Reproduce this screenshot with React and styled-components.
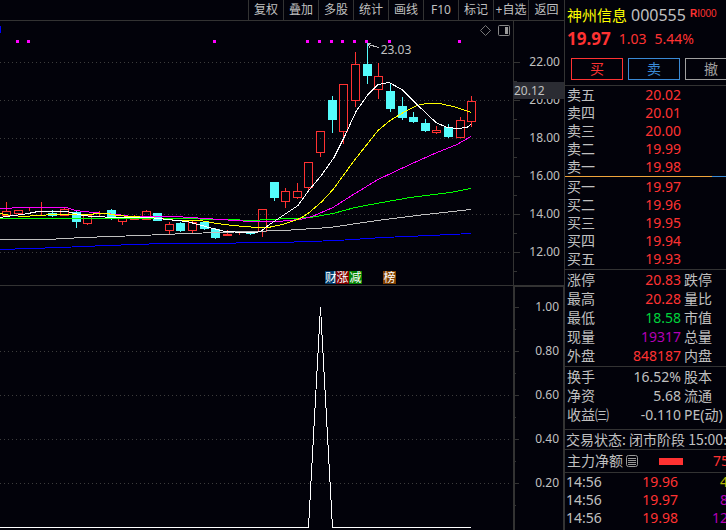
import React from "react";
import styled, { createGlobalStyle, css } from "styled-components";

const color = {
  bg: "#02020a",
  line: "#333333",
  text: "#c0c0c0",
  red: "#ff3232",
  cyan: "#54fcfc",
  blue: "#3a8ad6",
  green: "#00d23c",
  purple: "#b400b4",
  yellow: "#b4b400",
};

const GlobalStyle = createGlobalStyle`
  * { box-sizing: border-box; }
  body {
    margin: 0;
    background: ${color.bg};
    color: ${color.text};
    font-family: "Noto Sans", "Noto Sans CJK SC", sans-serif;
    font-size: 14px;
    overflow: hidden;
  }
  button { font-family: inherit; background: none; padding: 0; cursor: pointer; }
`;

const Layout = styled.div`
  display: flex;
  height: 100vh;
`;

const ChartColumn = styled.main`
  flex: 1;
  min-width: 0;
  display: flex;
  flex-direction: column;
`;

const Toolbar = styled.header`
  display: flex;
  justify-content: flex-end;
  height: 21px;
  flex: none;
  border-bottom: 1px solid ${color.line};
`;

const ToolGroup = styled.nav`
  display: flex;
  border-left: 1px solid ${color.line};
`;

const ToolButton = styled.button`
  width: 35px;
  border: 0;
  border-right: 1px solid ${color.line};
  color: ${color.text};
  font-size: 12px;
  line-height: 18px;
  white-space: nowrap;
  display: flex;
  justify-content: center;
  align-items: center;
  &:last-child { border-right: 0; }
`;

const ChartPane = styled.section`
  flex: ${(p) => p.$share} 1 0;
  min-height: 0;
  display: grid;
  grid-template-columns: minmax(0, 1fr) 51px;
`;

const Plot = styled.div`
  position: relative;
  min-height: 0;
  overflow: hidden;
  border-top: ${(p) => (p.$divided ? `1px solid ${color.line}` : "0")};
`;

const PlotSvg = styled.svg`
  display: block;
  width: 100%;
  height: 100%;
  shape-rendering: crispEdges;
`;

const PeakLabel = styled.span`
  position: absolute;
  left: 74.2%;
  top: 20px;
  font-size: 12px;
  line-height: 18px;
`;

const PlotTools = styled.div`
  position: absolute;
  top: 3px;
  right: 2px;
  display: flex;
  gap: 6px;
`;

const IconButton = styled.button`
  border: 0;
  width: 13px;
  height: 13px;
  display: flex;
`;

const Tags = styled.div`
  position: absolute;
  left: 63.35%;
  bottom: 1px;
  display: flex;
`;

const Tag = styled.span`
  width: 13px;
  height: 13px;
  margin-left: ${(p) => (p.$apart ? "21px" : "0")};
  background: ${(p) => p.$fill};
  color: #fff;
  font-size: 12px;
  line-height: 13px;
  text-align: center;
  &:first-child { width: 11px; }
`;

const Axis = styled.div`
  position: relative;
  display: flex;
  flex-direction: column;
  ${(p) =>
    p.$framed
      ? css`
          padding-right: 1px;
          box-shadow: inset 2px 2px 0 ${color.line}, inset -1px 0 0 ${color.line};
        `
      : css`border-left: 1px solid ${color.line};`}
`;

const AxisSpace = styled.div`
  flex: ${(p) => p.$share} 1 0;
`;

const AxisLabel = styled.div`
  position: relative;
  flex: ${(p) => p.$share} 1 0;
  display: flex;
  align-items: center;
  justify-content: flex-end;
  padding-right: 4px;
  font-size: 12px;
  line-height: 18px;
  &::before, &::after {
    content: "";
    position: absolute;
    left: 0;
    height: 1px;
    background: ${color.line};
  }
  &::before { top: 50%; width: 6px; }
  &::after { top: 100%; width: 3px; }
`;

const CursorPrice = styled.div`
  position: absolute;
  z-index: 1;
  top: 61px;
  left: -1px;
  right: 0;
  background: #2b2c33;
  padding-left: 1px;
  font-size: 12px;
  line-height: 17px;
`;

const QuotePanel = styled.aside`
  width: 162px;
  flex: none;
  border-left: 1px solid ${color.line};
  overflow: hidden;
  white-space: nowrap;
`;

const QuoteHead = styled.div`
  padding: 4px 0 5px 2px;
  border-bottom: 1px solid ${color.line};
`;

const NameRow = styled.h1`
  margin: 0;
  display: flex;
  gap: 4px;
  height: 22px;
  font-weight: 400;
  font-size: 15px;
  line-height: 22px;
`;

const StockName = styled.span`
  color: #ffff00;
`;

const StockCode = styled.span`
  font-size: 16px;
`;

const MarginMark = styled.span`
  color: ${color.red};
  font-family: "Liberation Sans", sans-serif;
  font-size: 10px;
  line-height: 20px;
`;

const PriceRow = styled.div`
  display: flex;
  gap: 8px;
  color: ${color.red};
  line-height: 26px;
`;

const LastPrice = styled.strong`
  font-size: 17px;
`;

const TradeButtons = styled.div`
  display: flex;
  gap: 5px;
  padding: 6px 0 0 4px;
`;

const TradeButton = styled.button`
  width: 52px;
  height: 22px;
  flex: none;
  border: 1px solid ${(p) => p.$tone};
  color: ${(p) => p.$tone};
  font-size: 14px;
  line-height: 18px;
`;

const DataTable = styled.table`
  width: 100%;
  table-layout: fixed;
  border-collapse: collapse;
  line-height: ${(p) => p.$row}px;
`;

const Block = styled.section`
  padding: ${(p) => p.$pad};
  border-bottom: 1px solid ${color.line};
`;

const NameCell = styled.th`
  width: 50px;
  padding: 0 0 0 2px;
  font-weight: 400;
  text-align: left;
`;

const ValueCell = styled.td`
  width: 66px;
  padding: 0;
  text-align: right;
  color: ${(p) => p.$tone};
`;

const NextCell = styled.td`
  padding: 0 0 0 3px;
`;

const Spread = styled.div`
  height: 1px;
  margin-bottom: 1px;
  background: linear-gradient(to right, #f0a53c 91%, ${color.blue} 91%);
`;

const StatusRow = styled.div`
  padding-left: 1px;
  font-family: "Noto Sans CJK SC", sans-serif;
  line-height: 19px;
  border-bottom: 1px solid ${color.line};
`;

const FlowRow = styled.div`
  display: flex;
  align-items: center;
  padding-left: 2px;
  line-height: 22px;
  border-bottom: 1px solid ${color.line};
`;

const FlowIcon = styled.svg`
  flex: none;
`;

const FlowBar = styled.span`
  flex: none;
  width: 24px;
  height: 7px;
  margin: 0 30px 0 21px;
  background: ${color.red};
`;

const FlowValue = styled.span`
  color: ${color.red};
`;

const TimeCell = styled.td`
  width: 50px;
  padding: 0 0 0 1px;
`;

const TickPrice = styled(ValueCell)`
  width: 63px;
`;

const VolumeCell = styled(ValueCell)`
  width: 50px;
`;

const tools = ["复权", "叠加", "多股", "统计", "画线", "F10", "标记", "+自选", "返回"];

// [body left, body top, body bottom, wick top, wick bottom, rising]
const candles = [
  [2, 211, 215, 202, 215, 1], [14, 210, 213, 210, 215, 1], [25, 211, 211, 208, 211, 1],
  [37, 211, 211, 202, 215, 1], [48, 213, 216, 210, 217, 0], [60, 209, 215, 208, 215, 1],
  [72, 212, 222, 210, 228, 0], [83, 215, 223, 215, 225, 1], [95, 215, 215, 211, 216, 1],
  [107, 210, 218, 209, 220, 0], [118, 217, 221, 217, 225, 1], [130, 218, 219, 215, 219, 1],
  [142, 211, 219, 210, 219, 1], [153, 213, 221, 213, 221, 0], [165, 224, 230, 222, 234, 1],
  [176, 223, 231, 222, 232, 0], [188, 222, 230, 220, 233, 1], [200, 222, 229, 222, 230, 0],
  [211, 229, 238, 228, 239, 0], [223, 234, 235, 230, 236, 1], [235, 231, 231, 231, 235, 1],
  [246, 232, 234, 231, 235, 0], [258, 209, 231, 209, 237, 1], [270, 182, 198, 182, 201, 0],
  [281, 191, 201, 188, 208, 1], [293, 191, 197, 183, 199, 1], [304, 162, 187, 162, 190, 1],
  [316, 131, 152, 131, 157, 1], [328, 100, 120, 96, 133, 0], [339, 84, 131, 84, 144, 1],
  [351, 64, 100, 52, 107, 1], [363, 64, 76, 42, 84, 0], [374, 76, 89, 63, 99, 1],
  [386, 91, 109, 83, 112, 0], [398, 106, 118, 97, 120, 0], [409, 117, 122, 112, 123, 0],
  [421, 123, 131, 119, 132, 0], [432, 130, 132, 126, 134, 1], [444, 127, 137, 124, 138, 0],
  [456, 120, 137, 117, 138, 1], [467, 101, 121, 96, 127, 1],
];

const averages = [
  ["#0000ff", "0,249 60,247 107,245 163,243 233,243 240,242 280,242 337,240 383,237 430,235 471,233"],
  ["#c0c0c0", "0,239 47,239 83,237 140,235 187,233 250,231 283,230 330,227 377,220 417,215 471,209"],
  ["#00ff00", "0,218 170,218 230,219 250,220 270,219 310,217 333,213 355,207 382,202 410,197 450,192 471,188"],
  ["#ff00ff", "0,208 24,207 67,207 75,210 93,212 117,214 132,216 175,216 220,219 250,221 277,221 300,219 312,216 333,207 355,193 378,179 410,164 437,152 457,144 471,136"],
  ["#ffff00", "0,213 10,215 25,216 35,215 58,214 92,214 95,213 107,213 117,215 130,216 150,217 177,220 200,220 217,223 233,225 257,227 268,227 283,224 300,218 308,213 322,201 333,189 355,159 378,130 390,120 405,111 415,106 420,104 428,103 440,103 457,107 471,112"],
  ["#ffffff", "0,217 13,215 23,214 28,213 38,211 67,211 75,213 83,215 93,216 117,217 150,217 167,219 187,221 198,224 213,228 225,231 245,232 257,232 262,230 268,225 283,215 298,205 308,191 322,174 334,157 345,135 356,111 368,94 378,84 389,82 402,89 418,105 436,122 447,127 458,128 467,127 471,124"],
];

const signals = [16, 27, 213, 306, 318, 330, 341, 353, 365, 388, 458];

function Grid({ levels }) {
  return levels.map((y) => (
    <line key={y} x1="0" x2="510" y1={y + 0.5} y2={y + 0.5} stroke="#3c3c3c" strokeDasharray="1 3" />
  ));
}

function Candle({ data: [x, top, bottom, high, low, up] }) {
  const tone = up ? color.red : color.cyan;
  const mid = x + 4;
  return (
    <g fill={tone}>
      {high < top && <rect x={mid} y={high} width="1" height={top - high} />}
      {low > bottom && <rect x={mid} y={bottom} width="1" height={low - bottom} />}
      {up ? (
        <rect x={x + 0.5} y={top + 0.5} width="8" height={bottom - top} fill="none" stroke={tone} />
      ) : (
        <rect x={x} y={top} width="9" height={bottom - top} />
      )}
    </g>
  );
}

function PriceChart() {
  return (
    <ChartPane $share={264}>
      <Plot>
        <PlotSvg viewBox="0 21 513 264" preserveAspectRatio="none" role="img" aria-label="K线">
          <Grid levels={[62, 100, 138, 176, 214, 252]} />
          <rect x="0" y="26" width="1" height="7" fill="#0000ff" />
          {candles.map((c) => <Candle key={c[0]} data={c} />)}
          {averages.map(([tone, points]) => (
            <polyline key={tone} points={points} fill="none" stroke={tone} transform="translate(0 0.5)" />
          ))}
          {signals.map((x) => <rect key={x} x={x} y="40" width="3" height="3" fill="#ff00ff" />)}
          <path d="M368 44.5 L379 47.5 M368 43.5 H371 M368 44 L370 48" stroke={color.text} fill="none" />
        </PlotSvg>
        <PeakLabel>23.03</PeakLabel>
        <PlotTools>
          <IconButton aria-label="标记点">
            <svg width="13" height="13" viewBox="0 0 13 13" fill="none" stroke="#777">
              <path d="M6.5 1.5 L11.5 6.5 L6.5 11.5 L1.5 6.5 Z" />
            </svg>
          </IconButton>
          <IconButton aria-label="侧栏">
            <svg width="13" height="13" viewBox="0 0 13 13">
              <rect x="0.5" y="1.5" width="11" height="10" rx="1" fill="none" stroke="#888" />
              <rect x="7" y="3" width="3" height="7" fill="#999" />
            </svg>
          </IconButton>
        </PlotTools>
        <Tags>
          <Tag $fill="#003c6e">财</Tag>
          <Tag $fill="#800000">涨</Tag>
          <Tag $fill="#008000">减</Tag>
          <Tag $fill="#804000" $apart>榜</Tag>
        </Tags>
      </Plot>
      <Axis>
        <CursorPrice>20.12</CursorPrice>
        <AxisSpace $share={22} />
        {["22.00", "20.00", "18.00", "16.00", "14.00", "12.00"].map((v) => (
          <AxisLabel key={v} $share={38}>{v}</AxisLabel>
        ))}
        <AxisSpace $share={14} />
      </Axis>
    </ChartPane>
  );
}

function SignalChart() {
  return (
    <ChartPane $share={245}>
      <Plot $divided>
        <PlotSvg viewBox="0 286 513 244" preserveAspectRatio="none" role="img" aria-label="指标">
          <Grid levels={[351, 395, 439, 483]} />
          <polyline points="0,527.5 308.5,527.5 320.5,307 332.5,527.5 471,527.5" fill="none" stroke="#fff" />
        </PlotSvg>
      </Plot>
      <Axis $framed>
        {["1.00", "0.80", "0.60", "0.40", "0.20"].map((v) => (
          <AxisLabel key={v} $share={44}>{v}</AxisLabel>
        ))}
        <AxisSpace $share={25} />
      </Axis>
    </ChartPane>
  );
}

function QuoteTable({ rows, row }) {
  return (
    <DataTable $row={row}>
      <tbody>
        {rows.map(([name, value, tone, next]) => (
          <tr key={name}>
            <NameCell scope="row">{name}</NameCell>
            <ValueCell $tone={tone}>{value}</ValueCell>
            <NextCell>{next}</NextCell>
          </tr>
        ))}
      </tbody>
    </DataTable>
  );
}

const { red } = color;
const asks = [["卖五", "20.02", red], ["卖四", "20.01", red], ["卖三", "20.00", red], ["卖二", "19.99", red], ["卖一", "19.98", red]];
const bids = [["买一", "19.97", red], ["买二", "19.96", red], ["买三", "19.95", red], ["买四", "19.94", red], ["买五", "19.93", red]];
const stats = [
  ["涨停", "20.83", red, "跌停"],
  ["最高", "20.28", red, "量比"],
  ["最低", "18.58", color.green, "市值"],
  ["现量", "19317", color.purple, "总量"],
  ["外盘", "848187", red, "内盘"],
];
const basics = [
  ["换手", "16.52%", color.text, "股本"],
  ["净资", "5.68", color.text, "流通"],
  ["收益㈢", "-0.110", color.text, "PE(动)"],
];
const ticks = [
  ["14:56", "19.96", "4", color.yellow],
  ["14:56", "19.97", "8", color.purple],
  ["14:56", "19.98", "12", color.purple],
];

export default function App() {
  return (
    <>
      <GlobalStyle />
      <Layout>
        <ChartColumn>
          <Toolbar>
            <ToolGroup>
              {tools.map((t) => <ToolButton key={t}>{t}</ToolButton>)}
            </ToolGroup>
          </Toolbar>
          <PriceChart />
          <SignalChart />
        </ChartColumn>
        <QuotePanel>
          <QuoteHead>
            <NameRow>
              <StockName>神州信息</StockName>
              <StockCode>000555</StockCode>
              <MarginMark><b>R</b>I000</MarginMark>
            </NameRow>
            <PriceRow>
              <LastPrice>19.97</LastPrice>
              <span>1.03</span>
              <span>5.44%</span>
            </PriceRow>
            <TradeButtons>
              <TradeButton $tone={color.red}>买</TradeButton>
              <TradeButton $tone={color.blue}>卖</TradeButton>
              <TradeButton $tone="#a0a0a0">撤</TradeButton>
            </TradeButtons>
          </QuoteHead>
          <QuoteTable rows={asks} row={18} />
          <Spread />
          <Block $pad="0 0 1px"><QuoteTable rows={bids} row={18} /></Block>
          <Block $pad="0 0 1px"><QuoteTable rows={stats} row={19} /></Block>
          <Block $pad="0 0 5px"><QuoteTable rows={basics} row={19} /></Block>
          <StatusRow>交易状态: 闭市阶段 15:00:</StatusRow>
          <FlowRow>
            主力净额
            <FlowIcon width="15" height="14" viewBox="0 0 15 14" fill="none" stroke="#999" aria-hidden="true">
              <rect x="3.5" y="1.5" width="11" height="11" rx="2" />
              <path d="M5 4.5h8M5 6.5h8M5 8.5h8M5 10.5h8" />
            </FlowIcon>
            <FlowBar />
            <FlowValue>75</FlowValue>
          </FlowRow>
          <DataTable $row={18}>
            <tbody>
              {ticks.map(([time, price, volume, tone]) => (
                <tr key={price}>
                  <TimeCell>{time}</TimeCell>
                  <TickPrice $tone={color.red}>{price}</TickPrice>
                  <VolumeCell $tone={tone}>{volume}</VolumeCell>
                </tr>
              ))}
            </tbody>
          </DataTable>
        </QuotePanel>
      </Layout>
    </>
  );
}
